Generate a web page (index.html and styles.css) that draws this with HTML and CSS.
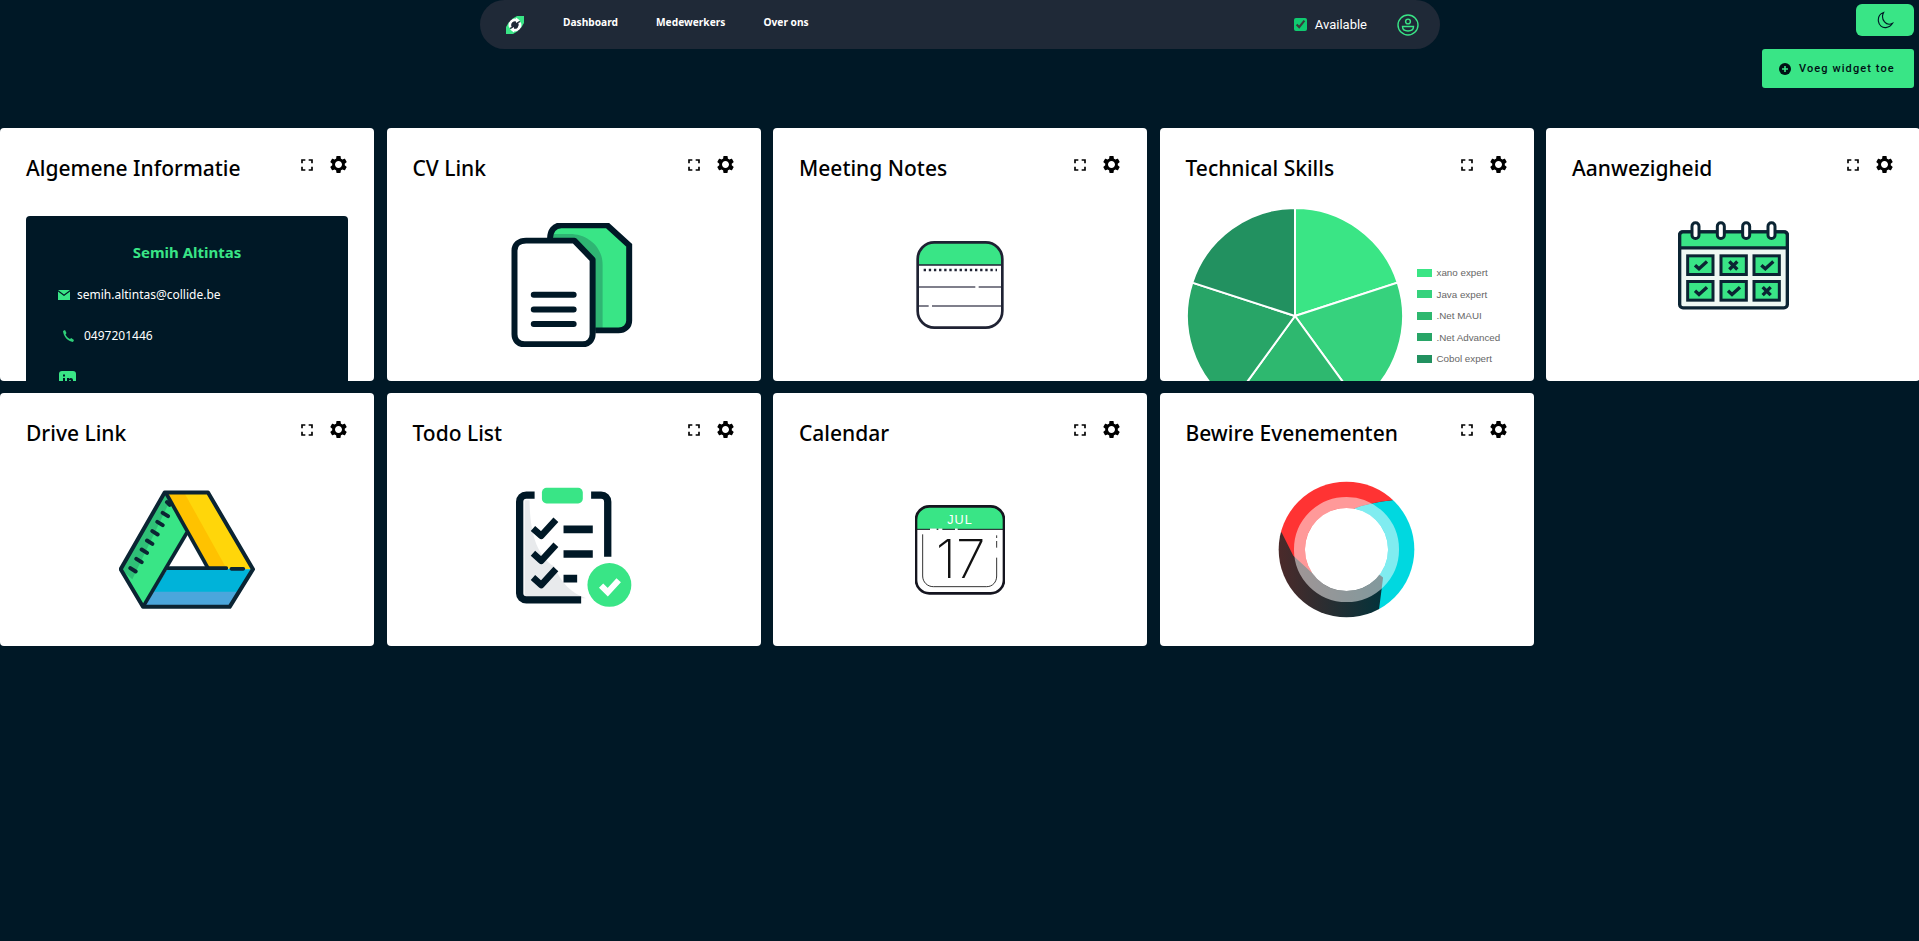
FILE: index.html
```html
<!DOCTYPE html>
<html>
<head>
	<meta charset="UTF-8">
	<title>Dashboard</title>
	<link rel="stylesheet" href="styles.css">
</head>
<body>
	<svg class="defs" width="0" height="0">
		<symbol id="i-expand" viewBox="0 0 24 24"><path d="M7 14H5v5h5v-2H7v-3zm-2-4h2V7h3V5H5v5zm12 7h-3v2h5v-5h-2v3zM14 5v2h3v3h2V5h-5z"/></symbol>
		<symbol id="i-gear" viewBox="0 0 24 24"><path d="M19.14 12.94c.04-.3.06-.61.06-.94 0-.32-.02-.64-.07-.94l2.03-1.58c.18-.14.23-.41.12-.61l-1.92-3.32c-.12-.22-.37-.29-.59-.22l-2.39.96c-.5-.38-1.03-.7-1.62-.94l-.36-2.54c-.04-.24-.24-.41-.48-.41h-3.84c-.24 0-.43.17-.47.41l-.36 2.54c-.59.24-1.13.57-1.62.94l-2.39-.96c-.22-.08-.47 0-.59.22L2.74 8.87c-.12.21-.08.47.12.61l2.03 1.58c-.05.3-.09.63-.09.94s.02.64.07.94l-2.03 1.58c-.18.14-.23.41-.12.61l1.92 3.32c.12.22.37.29.59.22l2.39-.96c.5.38 1.03.7 1.62.94l.36 2.54c.05.24.24.41.48.41h3.84c.24 0 .44-.17.47-.41l.36-2.54c.59-.24 1.13-.56 1.62-.94l2.39.96c.22.08.47 0 .59-.22l1.92-3.32c.12-.22.07-.47-.12-.61l-2.01-1.58zM12 16c-2.2 0-4-1.8-4-4s1.8-4 4-4 4 1.8 4 4-1.8 4-4 4z"/></symbol>
	</svg>

	<header class="top">
		<nav class="nav">
			<svg class="logo" viewBox="0 0 18 18" width="18" height="18">
				<polygon points="6,3 11,0 18,0 18,7 15,12" fill="#39e586"/>
				<polygon points="0,11 3,6 12,15 7,18 0,18" fill="#39e586"/>
				<circle cx="9" cy="9" r="6" fill="#1f2937"/>
				<path d="M4.500 11.500A5.200 5.200 0 0 1 11.500 4.500" fill="none" stroke="#fff" stroke-width="2.600"/>
				<path d="M13.500 6.500A5.200 5.200 0 0 1 6.500 13.500" fill="none" stroke="#fff" stroke-width="2.600"/>
				<polygon points="10,1.500 14,4.500 10,7" fill="#fff"/>
				<polygon points="8,11 4,13.500 8,16.500" fill="#fff"/>
			</svg>
			<a class="nav-link" href="#">Dashboard</a>
			<a class="nav-link" href="#">Medewerkers</a>
			<a class="nav-link" href="#">Over ons</a>
			<label class="status"><input type="checkbox" checked> Available</label>
			<svg class="user" viewBox="0 0 22 22" width="22" height="22" fill="none" stroke="#39e586" stroke-width="1.4">
				<circle cx="11" cy="11" r="10"/>
				<circle cx="11" cy="7.5" r="2.4"/>
				<path d="M5.5 12.5h11c0 3-2.5 4.5-5.500 4.500s-5.500-1.500-5.500-4.500z"/>
			</svg>
		</nav>
		<div class="actions">
			<button class="btn-theme">
				<svg viewBox="0 0 18 20" width="17" height="19" fill="none" stroke="#001826" stroke-width="1.2"><path d="M7 1.500C2.500 3 1 7 1.500 11c.6 4 4 7 8 6.500 3-.3 5.500-2 7-4.500-3 1.500-6.500 1-8.500-1.500C5.500 8.500 5.500 4.500 7 1.500z"/></svg>
			</button>
			<button class="btn-add">
				<svg viewBox="0 0 12 12" width="12" height="12"><circle cx="6" cy="6" r="6" fill="#001014"/><path d="M3 6h6M6 3v6" stroke="#39e586" stroke-width="1.600"/></svg>
				Voeg widget toe
			</button>
		</div>
	</header>

	<main class="grid">
		<section class="card">
			<div class="card-head">
				<h2>Algemene Informatie</h2>
				<div class="tools">
					<svg class="tool-expand"><use href="#i-expand"/></svg>
					<svg class="tool-gear"><use href="#i-gear"/></svg>
				</div>
			</div>
			<div class="info">
				<h3>Semih Altintas</h3>
				<div class="info-row">
					<svg viewBox="0 0 12 10" width="12" height="10"><path d="M0 0h12L6 4.500z" fill="#39e586"/><path d="M0 1.500L6 6l6-4.500V10H0z" fill="#39e586"/></svg>
					semih.altintas@collide.be
				</div>
				<div class="info-row info-phone">
					<svg viewBox="0 0 12 12" width="12" height="12"><path d="M1 1l2-1 1.500 3L3.500 4.500C4.500 6.500 6 8 8 9l1.200-1L12 10l-1 2C6 11.500 1.500 6.500 1 1z" fill="#2fd07a"/></svg>
					0497201446
				</div>
				<div class="info-row info-linkedin">
					<svg viewBox="0 0 17 17" width="17" height="17"><rect width="17" height="17" rx="3" fill="#39e586"/><path d="M4 7h2v7H4zM4 3.500h2v2H4zM8 7h2v1c1-1.500 4-1.500 4 1.500V14h-2v-4c0-1.500-2-1.500-2 0v4H8z" fill="#001826"/></svg>
				</div>
			</div>
		</section>

		<section class="card">
			<div class="card-head">
				<h2>CV Link</h2>
				<div class="tools">
					<svg class="tool-expand"><use href="#i-expand"/></svg>
					<svg class="tool-gear"><use href="#i-gear"/></svg>
				</div>
			</div>
			<div class="card-body">
				<svg width="125" height="124" viewBox="95 65 375 373">
					<path d="M212 112c0-22 12-40 34-40h138l66 60v226c0 18-14 30-32 30H340V180l-56-62H212z" fill="#39e586"/>
					<path d="M222 98h50c50 0 98 36 98 92v198h-30V175l-55-57H222z" fill="#2fb573"/>
					<path d="M212 112c0-22 12-40 34-40h138l66 60v226c0 18-14 30-32 30h-70" fill="none" stroke="#001826" stroke-width="18"/>
					<path d="M140 118h145l55 57v225c0 18-14 30-30 30H135c-18 0-30-12-30-30V148c0-18 14-30 35-30z" fill="#fff" stroke="#001826" stroke-width="18" stroke-linejoin="round"/>
					<path d="M163 281h120M163 325h120M163 369h120" stroke="#001826" stroke-width="18" stroke-linecap="round"/>
				</svg>
			</div>
		</section>

		<section class="card">
			<div class="card-head">
				<h2>Meeting Notes</h2>
				<div class="tools">
					<svg class="tool-expand"><use href="#i-expand"/></svg>
					<svg class="tool-gear"><use href="#i-gear"/></svg>
				</div>
			</div>
			<div class="card-body">
				<svg width="88" height="88" viewBox="77 60 264 264">
					<path d="M82 132v-18c0-28 22-50 50-50h154c28 0 50 22 50 50v18z" fill="#39e586"/>
					<path d="M84 132h250" stroke="#1f2233" stroke-width="4"/>
					<path d="M100 147h220" stroke="#1f2233" stroke-width="7" stroke-dasharray="7 8.400"/>
					<path d="M85 198h170M265 198h70M85 255h30M125 255h210" stroke="#555566" stroke-width="4"/>
					<rect x="82" y="64" width="254" height="256" rx="50" fill="none" stroke="#1f2233" stroke-width="8"/>
				</svg>
			</div>
		</section>

		<section class="card">
			<div class="card-head">
				<h2>Technical Skills</h2>
				<div class="tools">
					<svg class="tool-expand"><use href="#i-expand"/></svg>
					<svg class="tool-gear"><use href="#i-gear"/></svg>
				</div>
			</div>
			<div class="chart">
				<svg class="pie" width="218" height="218" viewBox="-109 -109 218 218" stroke="#fff" stroke-width="2">
					<path d="M0 0V-108A108 108 0 0 1 102.700 -33.400Z" fill="#3ae585"/>
					<path d="M0 0L102.700 -33.400A108 108 0 0 1 63.500 87.400Z" fill="#36d27d"/>
					<path d="M0 0L63.500 87.400A108 108 0 0 1 -63.500 87.400Z" fill="#2eb86f"/>
					<path d="M0 0L-63.500 87.400A108 108 0 0 1 -102.700 -33.400Z" fill="#28a567"/>
					<path d="M0 0L-102.700 -33.400A108 108 0 0 1 0 -108Z" fill="#229160"/>
				</svg>
				<ul class="legend">
					<li><i class="sw-1"></i>xano expert</li>
					<li><i class="sw-2"></i>Java expert</li>
					<li><i class="sw-3"></i>.Net MAUI</li>
					<li><i class="sw-4"></i>.Net Advanced</li>
					<li><i class="sw-5"></i>Cobol expert</li>
				</ul>
			</div>
		</section>

		<section class="card">
			<div class="card-head">
				<h2>Aanwezigheid</h2>
				<div class="tools">
					<svg class="tool-expand"><use href="#i-expand"/></svg>
					<svg class="tool-gear"><use href="#i-gear"/></svg>
				</div>
			</div>
			<div class="card-body">
				<svg width="111" height="127" viewBox="52 32 333 380">
					<rect x="57" y="64" width="323" height="228" rx="10" fill="#eef8f3" stroke="#0b2433" stroke-width="10"/>
					<path d="M57 112V74c0-6 4-10 10-10h303c6 0 10 4 10 10v38z" fill="#39e586" stroke="#0b2433" stroke-width="10"/>
					<g fill="#fff" stroke="#0b2433" stroke-width="9">
						<rect x="94" y="37" width="21" height="47" rx="10"/>
						<rect x="170" y="37" width="21" height="47" rx="10"/>
						<rect x="246" y="37" width="21" height="47" rx="10"/>
						<rect x="322" y="37" width="21" height="47" rx="10"/>
					</g>
					<g fill="#39e586" stroke="#0b2433" stroke-width="9">
						<rect x="81" y="136" width="76" height="56"/>
						<rect x="181" y="136" width="76" height="56"/>
						<rect x="280" y="136" width="76" height="56"/>
						<rect x="81" y="213" width="76" height="56"/>
						<rect x="181" y="213" width="76" height="56"/>
						<rect x="280" y="213" width="76" height="56"/>
					</g>
					<g fill="none" stroke="#0b2433" stroke-width="10">
						<path d="M103 164l12 11 24-22M302 164l12 11 24-22M103 241l12 11 24-22M202 241l12 11 24-22"/>
						<path d="M206 153l24 24M230 153l-24 24M306 230l24 24M330 230l-24 24"/>
					</g>
				</svg>
			</div>
		</section>

		<section class="card">
			<div class="card-head">
				<h2>Drive Link</h2>
				<div class="tools">
					<svg class="tool-expand"><use href="#i-expand"/></svg>
					<svg class="tool-gear"><use href="#i-gear"/></svg>
				</div>
			</div>
			<div class="card-body">
				<svg width="136" height="122" viewBox="28 30 408 355">
					<polygon points="165,35 295,35 430,265 295,262 232,150" fill="#ffd60a"/>
					<polygon points="172,38 225,38 350,262 295,262 232,150" fill="#ffc200"/>
					<polygon points="175,262 430,265 360,378 100,378" fill="#00b3d9"/>
					<polygon points="126,333 388,333 360,378 100,378" fill="#4ba6dc"/>
					<polygon points="165,35 232,150 100,378 33,265" fill="#39e586"/>
					<polygon points="165,35 180,62 68,295 33,265" fill="#2fc077"/>
					<path d="M175 262H350M365 264h36" fill="none" stroke="#0b2433" stroke-width="11" stroke-linecap="round"/>
					<path d="M62 262l16 10M80 234l16 10M96 206l16 10M112 179l16 10M128 151l16 10M143 123l16 10M159 96l16 10M172 64l8 8" fill="none" stroke="#0b2433" stroke-width="12" stroke-linecap="round"/>
					<path d="M232 155L100 378" stroke="#0b2433" stroke-width="11"/>
					<path d="M168 35L295 262" stroke="#0b2433" stroke-width="11"/>
					<path d="M165 35H295L430 265 360 378H100L33 265Z" fill="none" stroke="#0b2433" stroke-width="12" stroke-linejoin="round"/>
				</svg>
			</div>
		</section>

		<section class="card">
			<div class="card-head">
				<h2>Todo List</h2>
				<div class="tools">
					<svg class="tool-expand"><use href="#i-expand"/></svg>
					<svg class="tool-gear"><use href="#i-gear"/></svg>
				</div>
			</div>
			<div class="card-body">
				<svg width="117" height="130" viewBox="46 20 352 390">
					<path d="M75 65h15c0 90 20 170 75 200 20 50 50 80 95 95H75z" fill="#e8eaec"/>
					<path d="M105 50H80c-12 0-20 8-20 20v275c0 12 8 20 20 20h165M275 50h30c12 0 20 8 20 20v165" fill="none" stroke="#001826" stroke-width="22"/>
					<rect x="127" y="28" width="123" height="47" rx="14" fill="#39e586"/>
					<path d="M100 150l25 22 44-48M100 225l25 22 44-48M100 298l25 22 44-48" fill="none" stroke="#001826" stroke-width="20" stroke-linejoin="round"/>
					<path d="M192 153h88M192 227h88M192 301h41" stroke="#001826" stroke-width="23"/>
					<circle cx="330" cy="320" r="66" fill="#39e586"/>
					<path d="M305 322l20 20 33-36" fill="none" stroke="#fff" stroke-width="18"/>
				</svg>
			</div>
		</section>

		<section class="card">
			<div class="card-head">
				<h2>Calendar</h2>
				<div class="tools">
					<svg class="tool-expand"><use href="#i-expand"/></svg>
					<svg class="tool-gear"><use href="#i-gear"/></svg>
				</div>
			</div>
			<div class="card-body">
				<svg width="90" height="90" viewBox="45 27 270 270">
					<path d="M48 100V70c0-22 18-40 40-40h184c22 0 40 18 40 40v30z" fill="#39e586"/>
					<path d="M48 100h262" stroke="#15151f" stroke-width="3"/>
					<path d="M90 100h20M115 100h12M165 100h8" stroke="#fff" stroke-width="5"/>
					<path d="M68 115V240c0 18 14 32 32 32h160c18 0 30-14 30-32V185M290 118v8M290 135v20" fill="none" stroke="#333" stroke-width="3"/>
					<rect x="48" y="31" width="264" height="261" rx="40" fill="none" stroke="#15151f" stroke-width="8"/>
					<text x="180" y="84" class="cal-month">JUL</text>
					<text x="182" y="246" class="cal-day">17</text>
				</svg>
			</div>
		</section>

		<section class="card">
			<div class="card-head">
				<h2>Bewire Evenementen</h2>
				<div class="tools">
					<svg class="tool-expand"><use href="#i-expand"/></svg>
					<svg class="tool-gear"><use href="#i-gear"/></svg>
				</div>
			</div>
			<div class="card-body">
				<svg width="137" height="137" viewBox="24 30 412 412">
					<defs>
						<mask id="ring">
							<circle cx="230" cy="236" r="204" fill="#fff"/>
							<circle cx="230" cy="236" r="125" fill="#000"/>
						</mask>
						<linearGradient id="dark" x1="30" x2="340" y1="0" y2="0" gradientUnits="userSpaceOnUse">
							<stop offset="0" stop-color="#4a2a2a"/>
							<stop offset="1" stop-color="#03323a"/>
						</linearGradient>
					</defs>
					<g mask="url(#ring)">
						<rect x="0" y="0" width="480" height="450" fill="url(#dark)"/>
						<path d="M328 415L340 320 230 236 255 112Q300 95 368 88L420 20 480 20V450H340Z" fill="#00d8e0"/>
						<path d="M35 185L70 255 125 305 230 236 255 112Q300 95 368 88L380 0H0V170Z" fill="#ff3333"/>
					</g>
					<circle cx="230" cy="236" r="141.500" fill="none" stroke="#fff" stroke-width="33" opacity=".5"/>
				</svg>
			</div>
		</section>
	</main>
</body>
</html>
```

FILE: styles.css
```css
*{
	box-sizing:border-box;
}

body{
	margin:0;
	background:#001826;
	font-family:"Noto Sans",sans-serif;
	overflow-x:hidden;
}

.defs{
	position:absolute;
}

.top{
	height:128px;
	display:flex;
	align-items:flex-start;
	justify-content:space-between;
	padding:0 5px 0 480px;
}

.nav{
	width:960px;
	height:49px;
	background:#1f2937;
	border-radius:25px;
	display:flex;
	align-items:center;
	padding:0 21px 0 26px;
	color:#fff;
}

.logo{
	margin-right:39px;
}

.nav-link{
	color:#fff;
	text-decoration:none;
	font-size:10.200px;
	font-weight:700;
	margin-right:38px;
	margin-bottom:6px;
}

.status{
	margin-left:auto;
	display:flex;
	align-items:center;
	gap:8px;
	font-family:Roboto,sans-serif;
	font-size:13px;
	margin-right:30px;
}

.status input{
	margin:0;
	width:13px;
	height:13px;
	accent-color:#10c970;
}

.actions{
	display:flex;
	flex-direction:column;
	align-items:flex-end;
	gap:13px;
	padding-top:4px;
}

.btn-theme{
	width:58px;
	height:32px;
	background:#39e586;
	border:0;
	border-radius:6px;
	display:flex;
	align-items:center;
	justify-content:center;
	padding:0;
}

.btn-add{
	width:152px;
	height:39px;
	background:#39e586;
	border:0;
	border-radius:3px;
	display:flex;
	align-items:center;
	gap:8px;
	padding:0 0 0 17px;
	font-family:Roboto,sans-serif;
	font-size:11px;
	font-weight:500;
	letter-spacing:1.1px;
	color:#001014;
}

.grid{
	display:grid;
	grid-template-columns:repeat(5,374px);
	grid-auto-rows:253px;
	gap:12px 12.5px;
}

.card{
	background:#fff;
	border-radius:4px;
	overflow:hidden;
}

.card-head{
	height:60px;
	display:flex;
	align-items:flex-start;
	justify-content:space-between;
	padding:24px 26px 0;
}

.card-head h2{
	margin:0;
	font-size:21px;
	font-weight:500;
	line-height:32px;
	color:#000;
}

.tools{
	display:flex;
	align-items:center;
	gap:11px;
	padding-top:2px;
	margin-right:-1px;
}

.tool-expand{
	width:20px;
	height:20px;
}

.tool-gear{
	width:21px;
	height:21px;
}

.card-body{
	height:193px;
	display:flex;
	align-items:center;
	justify-content:center;
}

.info{
	margin:28px 26px 0;
	height:200px;
	background:#001826;
	border-radius:4px;
	color:#fff;
	font-size:12px;
	padding-top:26px;
}

.info h3{
	margin:0 0 12px;
	text-align:center;
	font-size:15px;
	line-height:20px;
	font-weight:700;
	color:#39e586;
}

.info-row{
	height:41px;
	display:flex;
	align-items:center;
	gap:7px;
	padding-left:32px;
}

.info-phone{
	padding-left:36px;
	gap:10px;
}

.info-linkedin{
	padding-left:33px;
	padding-top:6px;
}

.chart{
	display:flex;
	align-items:flex-start;
	padding-left:26px;
}

.pie{
	margin-top:19px;
	flex:none;
}

.legend{
	list-style:none;
	margin:74px 0 0 13px;
	padding:0;
	font-family:"Liberation Sans",sans-serif;
	font-size:9.800px;
	color:#666;
}

.legend li{
	height:21.5px;
	display:flex;
	align-items:center;
	gap:5px;
}

.legend i{
	width:15px;
	height:8px;
}

.sw-1{background:#3ae585;}
.sw-2{background:#36d27d;}
.sw-3{background:#2eb86f;}
.sw-4{background:#28a567;}
.sw-5{background:#229160;}

.cal-month{
	font-family:"Liberation Sans",sans-serif;
	font-size:38px;
	fill:#fff;
	text-anchor:middle;
	letter-spacing:3px;
}

.cal-day{
	font-family:Inter,sans-serif;
	font-size:160px;
	font-weight:200;
	fill:#111;
	text-anchor:middle;
}
```
